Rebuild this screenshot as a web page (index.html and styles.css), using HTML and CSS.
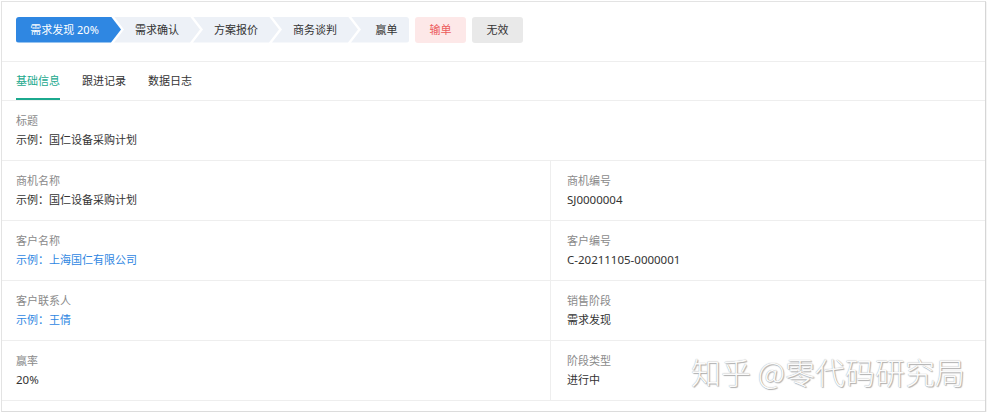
FILE: index.html
```html
<!DOCTYPE html>
<html lang="zh-CN">
<head>
<meta charset="utf-8">
<link rel="stylesheet" href="styles.css">
</head>
<body>
<div class="panel">
  <div class="steps-bar">
    <div class="steps">
      <div class="step step-first active">需求发现 20%</div>
      <div class="step step-mid">需求确认</div>
      <div class="step step-mid">方案报价</div>
      <div class="step step-mid">商务谈判</div>
      <div class="step step-last">赢单</div>
    </div>
    <div class="tag tag-lose">输单</div>
    <div class="tag tag-void">无效</div>
  </div>
  <div class="tabs">
    <div class="tab tab-active">基础信息</div>
    <div class="tab">跟进记录</div>
    <div class="tab">数据日志</div>
  </div>
  <div class="fields">
    <div class="row">
      <div class="cell cell-full">
        <div class="label">标题</div>
        <div class="value">示例：国仁设备采购计划</div>
      </div>
    </div>
    <div class="row">
      <div class="cell cell-left">
        <div class="label">商机名称</div>
        <div class="value">示例：国仁设备采购计划</div>
      </div>
      <div class="cell cell-right">
        <div class="label">商机编号</div>
        <div class="value latin">SJ0000004</div>
      </div>
    </div>
    <div class="row">
      <div class="cell cell-left">
        <div class="label">客户名称</div>
        <div class="value link">示例：上海国仁有限公司</div>
      </div>
      <div class="cell cell-right">
        <div class="label">客户编号</div>
        <div class="value latin">C-20211105-0000001</div>
      </div>
    </div>
    <div class="row">
      <div class="cell cell-left">
        <div class="label">客户联系人</div>
        <div class="value link">示例：王倩</div>
      </div>
      <div class="cell cell-right">
        <div class="label">销售阶段</div>
        <div class="value">需求发现</div>
      </div>
    </div>
    <div class="row">
      <div class="cell cell-left">
        <div class="label">赢率</div>
        <div class="value latin">20%</div>
      </div>
      <div class="cell cell-right">
        <div class="label">阶段类型</div>
        <div class="value">进行中</div>
      </div>
    </div>
  </div>
  <div class="watermark">知乎 @零代码研究局</div>
</div>
</body>
</html>
```

FILE: styles.css
```css
* { box-sizing: border-box; }
html, body { margin: 0; padding: 0; background: #fff; }
body {
  font-family: "Noto Sans", "Noto Sans CJK SC", sans-serif;
  font-size: 11px;
  color: #333;
}
.panel {
  position: relative;
  margin: 1px 0 0 1px;
  width: 985px;
  height: 411px;
  border: 1px solid #e3e3e3;
  border-right-color: #d6d6d6;
  border-bottom-color: #dcdcdc;
  box-shadow: 1px 1px 1px rgba(0,0,0,0.04);
}
.steps-bar {
  display: flex;
  align-items: center;
  height: 60px;
  padding: 0 0 4px 14px;
  border-bottom: 1px solid #eeeeee;
}
.steps { display: flex; }
.step {
  height: 26px;
  line-height: 26px;
  text-align: center;
  background: #edf1f7;
  color: #333;
}
.step-first {
  width: 105px;
  padding-right: 8px;
  border-radius: 3px 0 0 3px;
  clip-path: polygon(0 0, calc(100% - 10px) 0, 100% 50%, calc(100% - 10px) 100%, 0 100%);
}
.active { background: #2f87e2; color: #fff; }
.step-mid {
  width: 86px;
  margin-left: -7px;
  padding: 0 10px;
  clip-path: polygon(0 0, calc(100% - 10px) 0, 100% 50%, calc(100% - 10px) 100%, 0 100%, 10px 50%);
}
.step-last {
  width: 58px;
  margin-left: -7px;
  padding-left: 13px;
  border-radius: 0 3px 3px 0;
  clip-path: polygon(0 0, 100% 0, 100% 100%, 0 100%, 10px 50%);
}
.tag {
  width: 51px;
  height: 26px;
  line-height: 26px;
  text-align: center;
  border-radius: 3px;
  margin-left: 6px;
}
.tag-lose { background: #fde8e8; color: #ec5b5b; }
.tag-void { background: #e9e9e9; color: #333; }
.tabs {
  display: flex;
  gap: 22px;
  height: 39px;
  padding-left: 14px;
  border-bottom: 1px solid #eeeeee;
}
.tab {
  line-height: 36px;
  padding-top: 1px;
  color: #333;
  border-bottom: 2px solid transparent;
}
.tab-active { color: #1ba98e; border-bottom-color: #1ba98e; }
.row {
  display: flex;
  height: 60px;
  border-bottom: 1px solid #eeeeee;
}
.cell { padding: 10px 14px; }
.cell-full { flex: 1; }
.cell-left { width: 549px; border-right: 1px solid #eeeeee; }
.cell-right { flex: 1; padding-left: 16px; }
.label { line-height: 19px; color: #8a8a8a; }
.value { line-height: 20px; color: #333; }
.latin { font-size: 11.5px; }
.link { color: #2f87e2; }
.watermark {
  position: absolute;
  left: 689px;
  top: 349px;
  font-family: "Noto Sans CJK SC", sans-serif;
  font-size: 30px;
  font-weight: 300;
  line-height: 40px;
  color: #fbfbfb;
  text-shadow: 0 0 1px #999, 1px 1px 1px #b0b0b0;
  white-space: nowrap;
}
```
